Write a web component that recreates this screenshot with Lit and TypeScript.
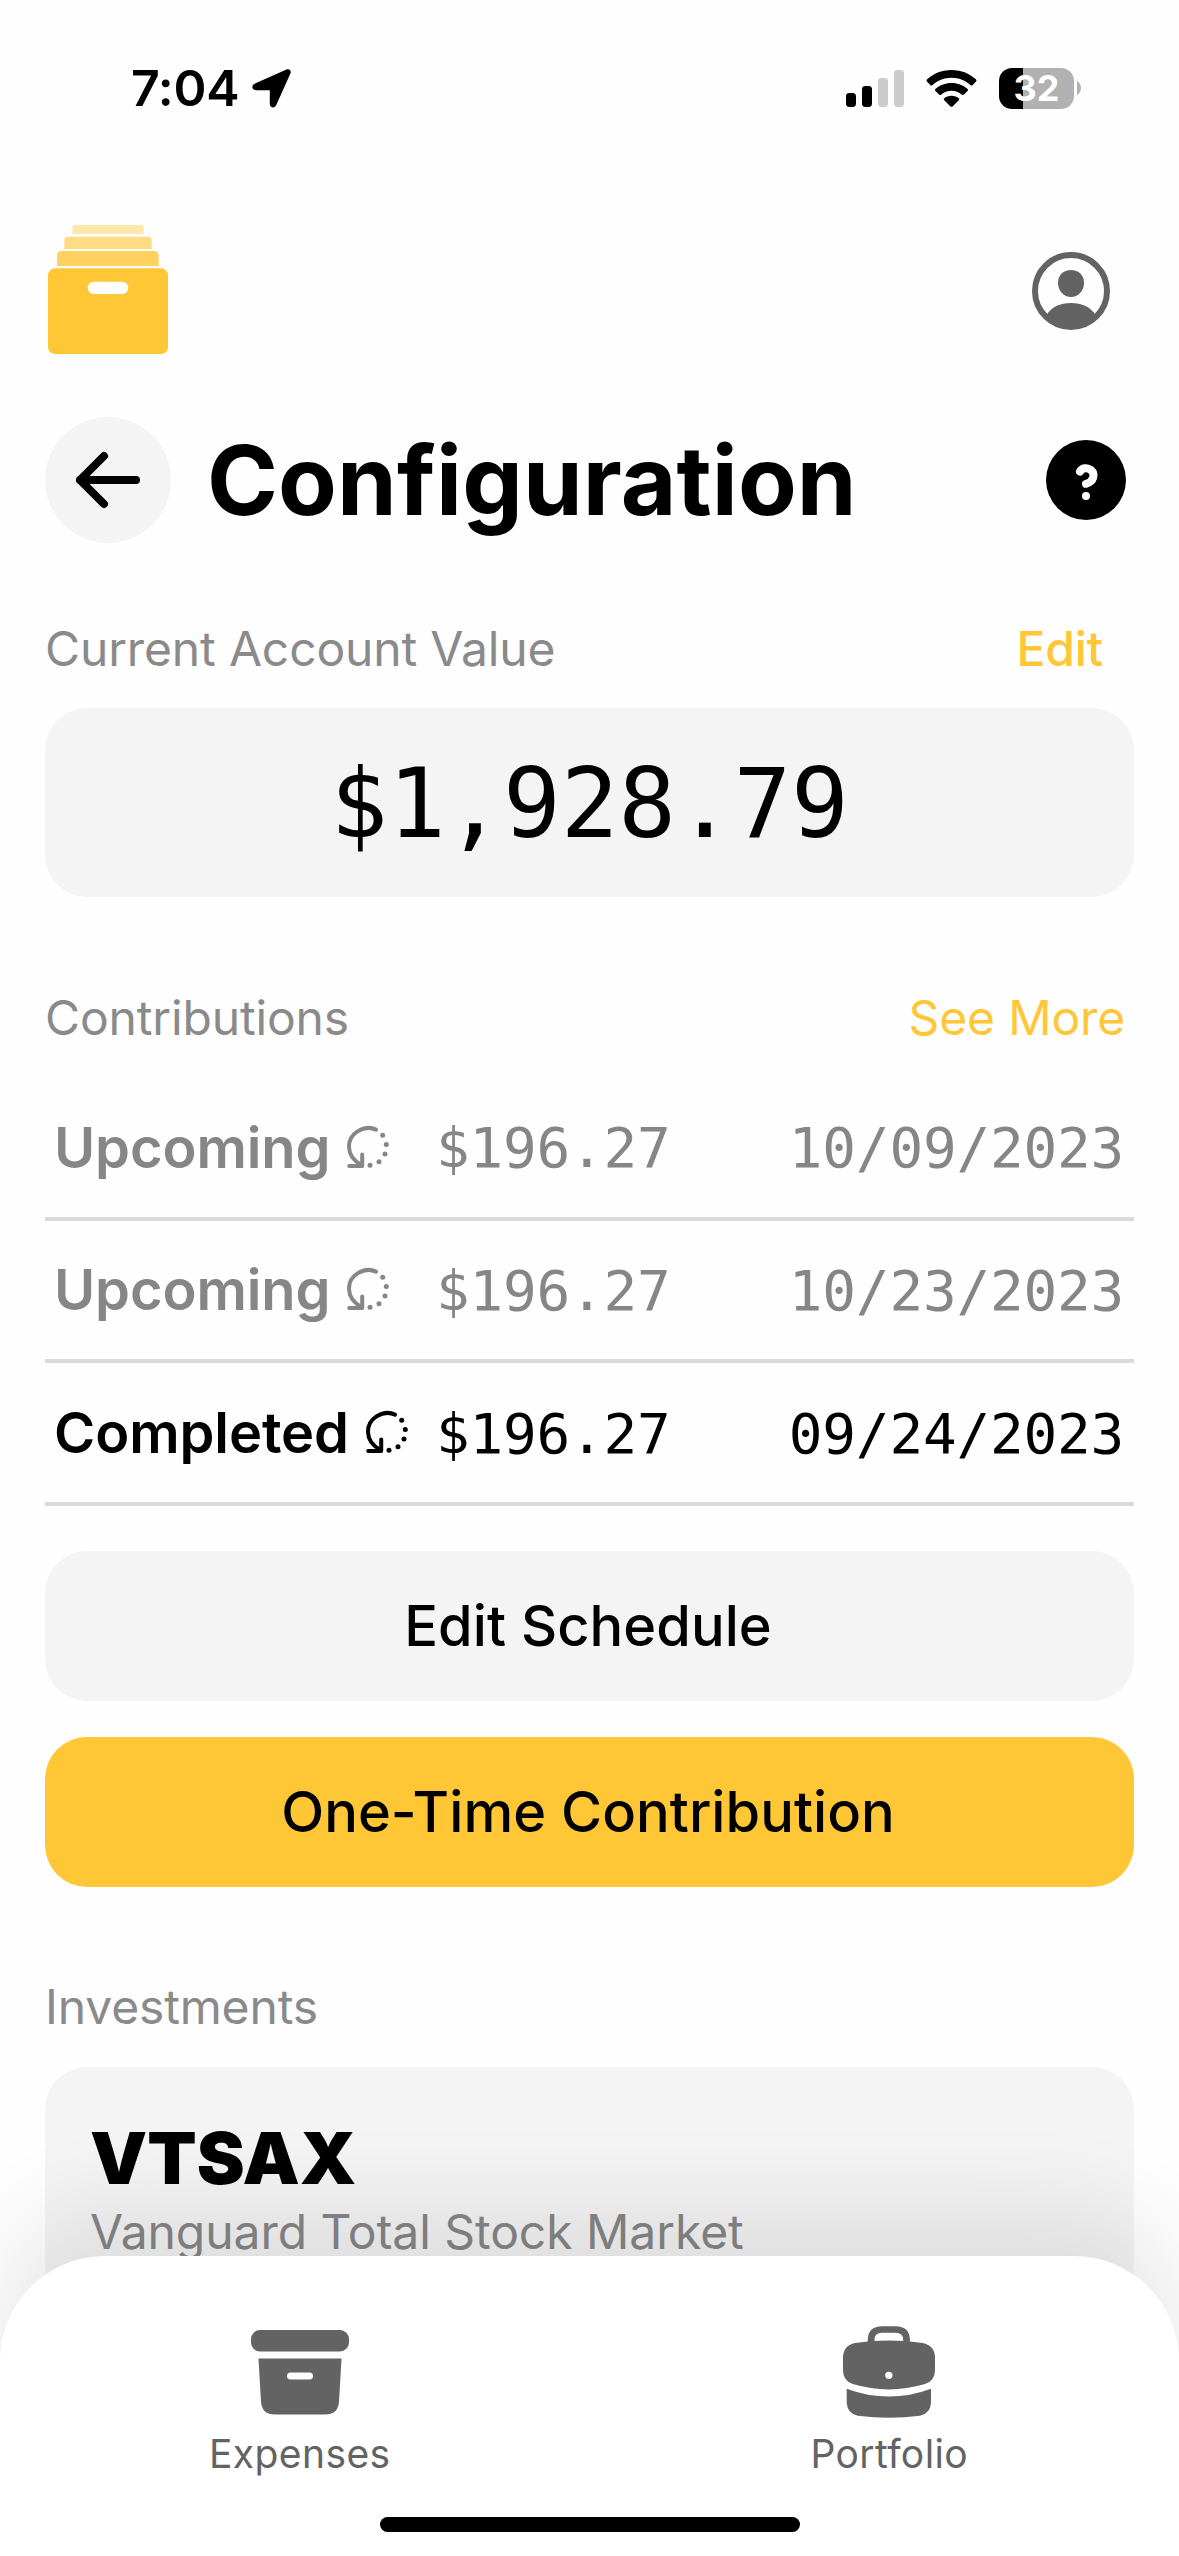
import { LitElement, html, css, svg } from "lit";
import { customElement } from "lit/decorators.js";
import { classMap } from "lit/directives/class-map.js";

interface Contribution {
  status: string;
  amount: string;
  date: string;
  done: boolean;
}

const CONTRIBUTIONS: Contribution[] = [
  { status: "Upcoming", amount: "$196.27", date: "10/09/2023", done: false },
  { status: "Upcoming", amount: "$196.27", date: "10/23/2023", done: false },
  { status: "Completed", amount: "$196.27", date: "09/24/2023", done: true },
];

const recurringDots = [[35.7, 9.3], [39.3, 18.6], [38, 28], [32, 35.7], [23, 39.3]];

const recurringIcon = html`<svg class="recurring" viewBox="0 0 42 42" fill="none" stroke="currentColor" stroke-width="4" stroke-linecap="round">
  <path d="M29 3.600C24 1.200 17 1.400 10.500 5.400C4.500 9.300 1.800 15 2 21C2.200 28 6 34 13.500 38.500" />
  <path d="M2.200 40H15.200V28.400" stroke-linejoin="round" />
  ${recurringDots.map(([x, y]) => svg`<circle cx=${x} cy=${y} r="2.5" fill="currentColor" stroke="none" />`)}
</svg>`;

@customElement("app-root")
export class AppRoot extends LitElement {
  static styles = css`
    :host {
      display: block;
      font-family: Inter, "Liberation Sans", sans-serif;
      color: #000;
    }
    svg { display: block; flex: none; overflow: visible; }
    .screen {
      position: relative;
      width: 1179px;
      height: 2556px;
      overflow: hidden;
      background: #fefefe;
    }
    .status {
      display: flex;
      align-items: center;
      height: 176px;
      padding: 0 98px 0 131px;
      box-sizing: border-box;
    }
    .time { font-size: 50px; font-weight: 600; line-height: 60px; letter-spacing: -0.3px; width: 121px; }
    .spacer { flex: 1; }
    .signal { margin-right: 22px; }
    .wifi { margin-right: 22px; }
    .battery { display: flex; align-items: center; gap: 3px; }
    .cell {
      width: 75px;
      height: 41px;
      border-radius: 13px;
      background: linear-gradient(90deg, #000 24px, #b1b1b1 24px);
      color: #fff;
      font-size: 36px;
      font-weight: 700;
      line-height: 41px;
      text-align: center;
    }
    .content { padding: 0 45px; }
    .brand {
      display: flex;
      align-items: flex-start;
      justify-content: space-between;
      height: 241px;
      padding: 49px 24px 0 3px;
      box-sizing: border-box;
    }
    .account { margin-top: 27px; }
    .heading { display: flex; align-items: center; height: 126px; padding-right: 8px; }
    .back {
      display: flex;
      align-items: center;
      justify-content: center;
      width: 126px;
      height: 126px;
      border-radius: 50%;
      background: #f4f4f4;
    }
    h1 { margin: 0 0 0 36px; flex: 1; font-size: 96px; font-weight: 700; line-height: 116px; letter-spacing: 0.1px; }
    .label {
      display: flex;
      justify-content: space-between;
      font-size: 48px;
      line-height: 60px;
      letter-spacing: -0.15px;
      color: #8a8a8a;
    }
    .label.value { margin-top: 76px; padding-right: 31px; }
    .label.contrib { margin-top: 91px; padding-right: 9px; }
    .label.invest { margin-top: 90px; }
    .link { color: #ffc736; }
    .link.strong { font-weight: 500; }
    .total {
      display: flex;
      align-items: center;
      justify-content: center;
      height: 189px;
      margin-top: 29px;
      padding-top: 2px;
      box-sizing: border-box;
      border-radius: 42px;
      background: #f4f4f4;
      font-family: "DejaVu Sans Mono", monospace;
      font-size: 96px;
      letter-spacing: -0.2px;
    }
    .rows { display: grid; grid-template-rows: repeat(3, 1fr); height: 428px; margin-top: 30px; }
    .row {
      display: grid;
      grid-template-columns: 382px 1fr auto;
      align-items: center;
      box-sizing: border-box;
      padding: 1px 10px 0 9px;
      border-bottom: 4px solid #dadada;
      color: #868686;
      font-size: 56px;
    }
    .row.done { color: #000; }
    .kind { display: flex; align-items: center; gap: 17px; font-weight: 600; line-height: 68px; letter-spacing: -0.1px; }
    .recurring { width: 42px; height: 42px; margin-top: -2px; }
    .mono { font-family: "DejaVu Sans Mono", monospace; letter-spacing: -0.2px; }
    .button {
      display: flex;
      align-items: center;
      justify-content: center;
      height: 150px;
      padding-right: 3px;
      box-sizing: border-box;
      border-radius: 42px;
      background: #f4f4f4;
      font-size: 56px;
      font-weight: 500;
      letter-spacing: 0.05px;
    }
    .button.first { margin-top: 45px; }
    .button.primary { margin-top: 36px; background: #ffc736; }
    .fund {
      height: 400px;
      margin-top: 30px;
      padding: 51px 45px 0;
      box-sizing: border-box;
      border-radius: 42px;
      background: #f4f4f4;
    }
    .ticker { font-size: 72px; font-weight: 900; line-height: 80px; }
    .name { margin-top: 4px; font-size: 48px; line-height: 60px; letter-spacing: -0.05px; color: #868686; }
    .tabs {
      position: absolute;
      left: 0;
      right: 0;
      bottom: 0;
      height: 300px;
      border-radius: 105px 105px 0 0;
      background: #fff;
      box-shadow: 0 -50px 90px rgba(0, 0, 0, 0.085);
    }
    .tablist { display: grid; grid-template-columns: 1fr 1fr; height: 261px; margin: 0 -5px 0 5px; }
    .tab {
      display: flex;
      flex-direction: column;
      align-items: center;
      justify-content: flex-end;
      padding-bottom: 39px;
      gap: 12px;
      color: #636363;
      font-size: 39px;
      line-height: 48px;
      letter-spacing: 0.4px;
    }
    .tab svg { height: 92px; }
    .indicator { width: 420px; height: 15px; margin: 0 auto; border-radius: 8px; background: #000; }
  `;

  private statusBar() {
    return html`<div class="status">
      <div class="time">7:04</div>
      <svg width="39" height="39" viewBox="0 0 39 39"><path d="M3 14.5 L34.5 .5 C37.5 -.5 39.5 1.5 38.4 4.5 L24.3 36 C22.8 39.8 17.8 39 17.8 35 V21.2 H4 C-.3 21 -1 16.4 3 14.5Z" /></svg>
      <div class="spacer"></div>
      <svg class="signal" width="58" height="37" viewBox="0 0 58 37">
        <rect x="0" y="23" width="10" height="14" rx="3.4" /><rect x="16" y="16" width="10" height="21" rx="3.4" />
        <rect x="32" y="8" width="10" height="29" rx="3.4" fill="#ccc" /><rect x="48" y="0" width="10" height="37" rx="3.4" fill="#ccc" />
      </svg>
      <svg class="wifi" width="51" height="37" viewBox="0 0 51 37">
        <path d="M25.5 0 C35.5 0 44 3.8 50.1 9.6 Q51 10.6 50.1 11.6 L46.4 15.2 Q45.6 16 44.6 15.2 C39.4 10.5 33 7.8 25.5 7.8 S11.600 10.500 6.400 15.200 Q5.400 16 4.600 15.200 L.9 11.600 Q0 10.600 .9 9.600 C7 3.800 15.500 0 25.500 0Z" />
        <path d="M25.500 13 C32 13 37.600 15.400 41.600 19 Q42.500 20 41.600 21 L37.700 24.700 Q36.800 25.400 35.900 24.700 C33 22.200 29.500 20.700 25.500 20.700 S18 22.200 15.100 24.700 Q14.200 25.400 13.300 24.700 L9.400 21 Q8.500 20 9.400 19 C13.400 15.400 19 13 25.500 13Z" />
        <path d="M25.500 25.800 C28.500 25.800 31 26.900 32.700 28.300 Q33.600 29.300 32.700 30.300 L26.500 36.400 Q25.500 37.300 24.500 36.400 L18.300 30.300 Q17.400 29.300 18.300 28.300 C20 26.900 22.500 25.800 25.500 25.800Z" />
      </svg>
      <div class="battery">
        <div class="cell">32</div>
        <svg width="4" height="14" viewBox="0 0 4 14"><path d="M0 0C5.300 2.500 5.300 11.500 0 14Z" fill="#b1b1b1" /></svg>
      </div>
    </div>`;
  }

  private header() {
    return html`<div class="brand">
        <svg width="120" height="129" viewBox="0 0 360 387">
          <path d="M73 27V8Q73 0 81 0H279Q287 0 287 8V27Z" fill="#ffe6ab" />
          <path d="M49 72V45Q49 35 59 35H301Q311 35 311 45V72Z" fill="#ffdb83" />
          <path d="M27 123V92Q27 78 41 78H318Q332 78 332 92V123Z" fill="#ffd15e" />
          <rect y="130" width="360" height="257" rx="21" fill="#ffc736" />
          <rect x="119" y="170" width="122" height="37" rx="18.500" fill="#fff" />
        </svg>
        <svg class="account" width="78" height="78" viewBox="0 0 234 234" fill="#636363">
          <circle cx="117" cy="117" r="108" fill="none" stroke="#636363" stroke-width="18" />
          <path d="M117 54C140 54 156 70 156 92C156 117 138 135 117 135S78 117 78 92C78 70 94 54 117 54Z" />
          <path d="M44 189C56 166 85 153 117 153S178 166 190 189C170 214 145 226 117 226S64 214 44 189Z" />
        </svg>
      </div>
      <div class="heading">
        <div class="back">
          <svg width="64" height="56" viewBox="0 0 64 56" fill="none" stroke="#000" stroke-width="8" stroke-linecap="round" stroke-linejoin="round"><path d="M28 4L4 28L28 52M4 28H60" /></svg>
        </div>
        <h1>Configuration</h1>
        <svg width="80" height="80" viewBox="0 0 80 80">
          <circle cx="40" cy="40" r="40" />
          <path d="M34 31.500C36 28 41 27 45 30C49.500 34 48 42 40 43.800" fill="none" stroke="#fff" stroke-width="8" stroke-linecap="round" stroke-linejoin="round" />
          <circle cx="40" cy="56" r="4" fill="#fff" />
        </svg>
      </div>`;
  }

  private row(c: Contribution) {
    return html`<div class=${classMap({ row: true, done: c.done })}>
      <div class="kind"><span>${c.status}</span>${recurringIcon}</div>
      <div class="mono">${c.amount}</div>
      <div class="mono">${c.date}</div>
    </div>`;
  }

  private tabBar() {
    return html`<div class="tabs">
      <div class="tablist">
        <div class="tab">
          <svg width="98" height="92" viewBox="0 0 98 92" fill="currentColor">
            <rect y="4" width="98" height="21.500" rx="9" />
            <path fill-rule="evenodd" d="M7.500 32.500H90.500L88 76Q87 88.500 74 88.500H24Q11 88.500 10 76ZM39.500 46.500A3.500 3.500 0 0 0 39.500 53.500H58.500A3.500 3.500 0 0 0 58.500 46.500Z" />
          </svg>
          <span>Expenses</span>
        </div>
        <div class="tab">
          <svg width="92" height="92" viewBox="313 559 275 274" fill="currentColor">
            <path d="M397 606V601Q397 569 430 569H470Q503 569 503 601V606" fill="none" stroke="currentColor" stroke-width="20" />
            <path fill-rule="evenodd" d="M349 609Q450 595 551 609Q588 617 588 653V690Q588 722 558 732Q504 748 450 748T342 732Q313 722 313 690V653Q313 617 349 609ZM450 695A11 11 0 1 0 450 717A11 11 0 1 0 450 695Z" />
            <path d="M324 746Q450 793 576 746V788Q574 820 543 827Q450 838 357 827Q326 820 324 788Z" />
          </svg>
          <span>Portfolio</span>
        </div>
      </div>
      <div class="indicator"></div>
    </div>`;
  }

  render() {
    return html`<div class="screen">
      ${this.statusBar()}
      <div class="content">
        ${this.header()}
        <div class="label value"><span>Current Account Value</span><span class="link strong">Edit</span></div>
        <div class="total">$1,928.79</div>
        <div class="label contrib"><span>Contributions</span><span class="link">See More</span></div>
        <div class="rows">${CONTRIBUTIONS.map((c) => this.row(c))}</div>
        <div class="button first">Edit Schedule</div>
        <div class="button primary">One-Time Contribution</div>
        <div class="label invest">Investments</div>
        <div class="fund">
          <div class="ticker">VTSAX</div>
          <div class="name">Vanguard Total Stock Market</div>
        </div>
      </div>
      ${this.tabBar()}
    </div>`;
  }
}
